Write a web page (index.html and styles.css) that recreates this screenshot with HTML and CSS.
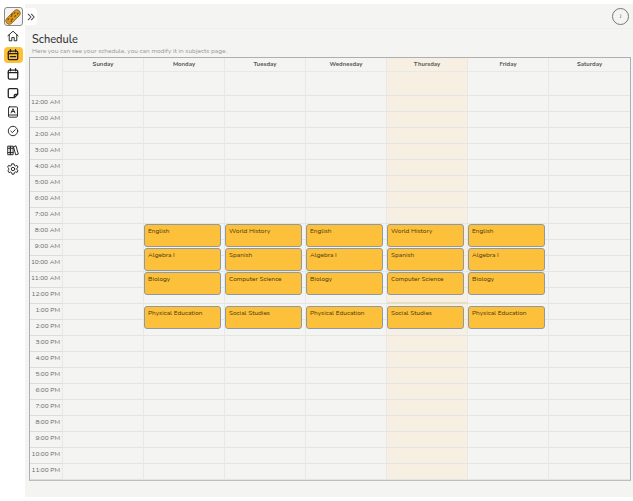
FILE: index.html
```html
<!DOCTYPE html>
<html lang="en">
<head>
<meta charset="utf-8">
<title>Schedule</title>
<link rel="stylesheet" href="styles.css">
</head>
<body>
<aside class="sidebar">
  <div class="logo">
    <svg viewBox="0 0 18 18" width="16" height="16"><g transform="rotate(-45 9 9)"><rect x="-1" y="5" width="20" height="8" rx="4" fill="#d8961e" stroke="#6b4a10" stroke-width=".6"/><path d="M3 7h1M6 10h1M8 7h1M11 10h1M13 7h1M15 10h1M4 11h1M10 6h1" stroke="#5a3d0c" stroke-width="1.2" stroke-linecap="round"/></g></svg>
  </div>
  <nav class="nav">
    <a class="nav-item"><svg viewBox="0 0 14 14" width="12" height="12" class="ico"><path d="M1 6.8 7 1.4l6 5.4M2.6 5.6v7h3V8.8h2.8v3.8h3v-7"/></svg></a>
    <a class="nav-item active"><svg viewBox="0 0 14 14" width="12" height="12" class="ico heavy"><rect x="1.5" y="2.5" width="11" height="10" rx="1.5"/><path d="M4 .8v2.4M10 .8v2.4M1.5 5.4h11M4 9h6"/></svg></a>
    <a class="nav-item"><svg viewBox="0 0 14 14" width="12" height="12" class="ico heavy"><rect x="1.5" y="2.5" width="11" height="10.5" rx="1.5"/><path d="M4 .8v2.4M10 .8v2.4M1.5 5.4h11"/></svg></a>
    <a class="nav-item"><svg viewBox="0 0 14 14" width="12" height="12" class="ico heavy"><path d="M3 1.8h8a1.5 1.5 0 0 1 1.5 1.5V8.500L8.500 12.500H3a1.500 1.500 0 0 1-1.500-1.500V3.300A1.500 1.500 0 0 1 3 1.800ZM12.500 8.500H10a1.500 1.500 0 0 0-1.500 1.500v2.500"/></svg></a>
    <a class="nav-item"><svg viewBox="0 0 14 14" width="12" height="12" class="ico"><rect x="1.800" y="1" width="10.400" height="12" rx="1.200"/><path d="M1.800 10.500h10.400M4.800 8 7 3.200 9.200 8M5.600 6.500h2.800"/></svg></a>
    <a class="nav-item"><svg viewBox="0 0 14 14" width="12" height="12" class="ico"><circle cx="7" cy="7" r="5.500"/><path d="m4.500 7.200 1.800 1.700 3.300-3.400"/></svg></a>
    <a class="nav-item"><svg viewBox="0 0 14 14" width="12" height="12" class="ico"><path d="M1.300 2.500h2.900v10H1.300zM4.200 2.500h2.900v10H4.200zM8 3l2.500-.8 2.700 9.600-2.600.8zM1.300 5h5.800M1.300 10h5.800"/></svg></a>
    <a class="nav-item"><svg viewBox="0 0 14 14" width="12" height="12" class="ico"><path d="M5.800 1h2.400l.4 1.800 1.400.7 1.700-.7 1.200 2.100-1.400 1.200v1.600l1.400 1.200-1.200 2.100-1.700-.7-1.400.7L8.200 13H5.800l-.4-1.800-1.400-.7-1.700.7-1.200-2.100L2 8V6.100L.7 4.900l1.200-2.100 1.700.7 1.400-.7z"/><circle cx="7" cy="7" r="2"/></svg></a>
  </nav>
</aside>
<main class="main">
  <header class="topbar">
    <button class="collapse" type="button"><svg viewBox="0 0 10 10" width="8" height="8" class="ico chev"><path d="m1.500 1.500 3.500 3.500-3.500 3.500M5.500 1.500 9 5 5.500 8.500"/></svg></button>
    <div class="avatar">J</div>
  </header>
  <section class="content">
    <h1 class="title">Schedule</h1>
    <p class="subtitle">Here you can see your schedule, you can modify it in subjects page.</p>
    <div class="calendar">
      <div class="corner"></div>
      <div class="day-head">Sunday</div>
      <div class="day-head">Monday</div>
      <div class="day-head">Tuesday</div>
      <div class="day-head">Wednesday</div>
      <div class="day-head today">Thursday</div>
      <div class="day-head">Friday</div>
      <div class="day-head last">Saturday</div>
      <div class="body" id="body"></div>
    </div>
  </section>
</main>
<script src="app.js"></script>
</body>
</html>
```
FILE: styles.css
```css
* { box-sizing: border-box; }
html, body { margin: 0; height: 100%; }
body {
  display: flex;
  background: #fff;
  font-family: "Nunito", "Lato", "Noto Sans", sans-serif;
  color: #333;
  overflow: hidden;
}
.sidebar { width: 25px; flex: none; display: flex; flex-direction: column; align-items: center; padding: 7px 0 0 1px; }
.logo {
  width: 19px; height: 19px; border: 1px solid #8a8a8a; border-radius: 3px;
  display: flex; align-items: center; justify-content: center; background: #f4f4f2;
}
.nav { display: flex; flex-direction: column; align-items: center; margin-top: 2px; }
.nav-item { width: 19px; height: 16px; margin-bottom: 3px; display: flex; align-items: center; justify-content: center; border-radius: 4px; }
.nav-item.active { background: #fdc03a; }
.ico { fill: none; stroke: #222; stroke-width: 1.100; stroke-linejoin: round; stroke-linecap: round; }
.ico.heavy { stroke-width: 1.500; }
.main { flex: 1; margin-top: 4px; height: 493px; background: #f4f4f2; display: flex; flex-direction: column; }
.topbar { height: 25px; flex: none; border-bottom: 1px solid #efefed; display: flex; align-items: center; justify-content: space-between; padding: 0 5px 0 0; }
.collapse { width: 12px; height: 17px; padding: 0; border: 0; background: #fff; border-radius: 0 4px 4px 0; display: flex; align-items: center; justify-content: center; margin-top: 1px; }
.chev { stroke: #444; stroke-width: 1.300; }
.avatar { width: 17px; height: 17px; border: 1px solid #777; border-radius: 50%; font-size: 5px; text-align: center; line-height: 15px; color: #555; margin-top: 1px; }
.content { padding: 0 3px 0 4px; }
.title { margin: 4px 0 0 3px; font-size: 11px; line-height: 13px; font-weight: 500; color: #333; }
.subtitle { margin: 0 0 0 3px; font-size: 6.500px; line-height: 9px; color: #999; height: 11px; }
.calendar {
  display: grid;
  grid-template-columns: 33px repeat(7, 81px);
  grid-template-rows: 14px 409px;
  width: 602px; height: 424px;
  border: 1px solid #aeaeb4;
  border-bottom: 2px solid #bdbdbd;
}
.corner { border-right: 1px solid #e8e8e6; }
.day-head { font-size: 6px; font-weight: 700; color: #555; text-align: center; line-height: 13px; border-right: 1px solid #e8e8e6; border-bottom: 1px solid #e8e8e6; }
.day-head.last { border-right: 0; }
.day-head.today { background: #f6efe2; }
.body { grid-column: 1 / -1; display: grid; grid-template-columns: 33px repeat(7, 81px); grid-template-rows: 24px repeat(24, 16px); position: relative; }
.cell { border-right: 1px solid #e8e8e6; border-bottom: 1px solid #e4e4e2; }
.cell.top { border-bottom-width: 1px; }
.cell.label { font-size: 6.500px; line-height: 11px; text-align: right; padding-right: 2px; color: #666; border-bottom: 1px solid #dcdcda; }
.cell.today { background: #f6efe2; }
.cell.last { border-right: 0; }
.event {
  position: absolute; width: 77px; height: 23px; background: #fdc03a;
  border: 1px solid #8f9aa0; border-radius: 3px;
  font-size: 6.500px; line-height: 9px; padding: 1px 3px; color: #4a3a10;
}
.now { position: absolute; left: 357px; width: 81px; height: 2px; background: #e3e0c4; }
```
FILE: app.js
```js
var body = document.getElementById('body');
var times = ['12:00 AM'];
for (var h = 1; h < 12; h++) times.push(h + ':00 AM');
times.push('12:00 PM');
for (h = 1; h < 12; h++) times.push(h + ':00 PM');
function cell(cls, text) {
  var d = document.createElement('div');
  d.className = 'cell ' + cls;
  if (text) d.textContent = text;
  body.appendChild(d);
}
function row(label, rowClass) {
  cell('label', label);
  for (var i = 0; i < 7; i++) cell((i === 4 ? 'today ' : '') + (i === 6 ? 'last ' : '') + rowClass);
}
row('', 'top');
times.forEach(function (t) { row(t, ''); });
var sched = {
  1: ['English', 'Algebra I', 'Biology', 'Physical Education'],
  2: ['World History', 'Spanish', 'Computer Science', 'Social Studies'],
  3: ['English', 'Algebra I', 'Biology', 'Physical Education'],
  4: ['World History', 'Spanish', 'Computer Science', 'Social Studies'],
  5: ['English', 'Algebra I', 'Biology', 'Physical Education']
};
var tops = [152, 176, 200, 234];
Object.keys(sched).forEach(function (d) {
  sched[d].forEach(function (name, i) {
    var e = document.createElement('div');
    e.className = 'event';
    e.textContent = name;
    e.style.left = (33 + d * 81) + 'px';
    e.style.top = tops[i] + 'px';
    body.appendChild(e);
  });
});
var now = document.createElement('div');
now.className = 'now';
now.style.top = '230px';
body.appendChild(now);
```
